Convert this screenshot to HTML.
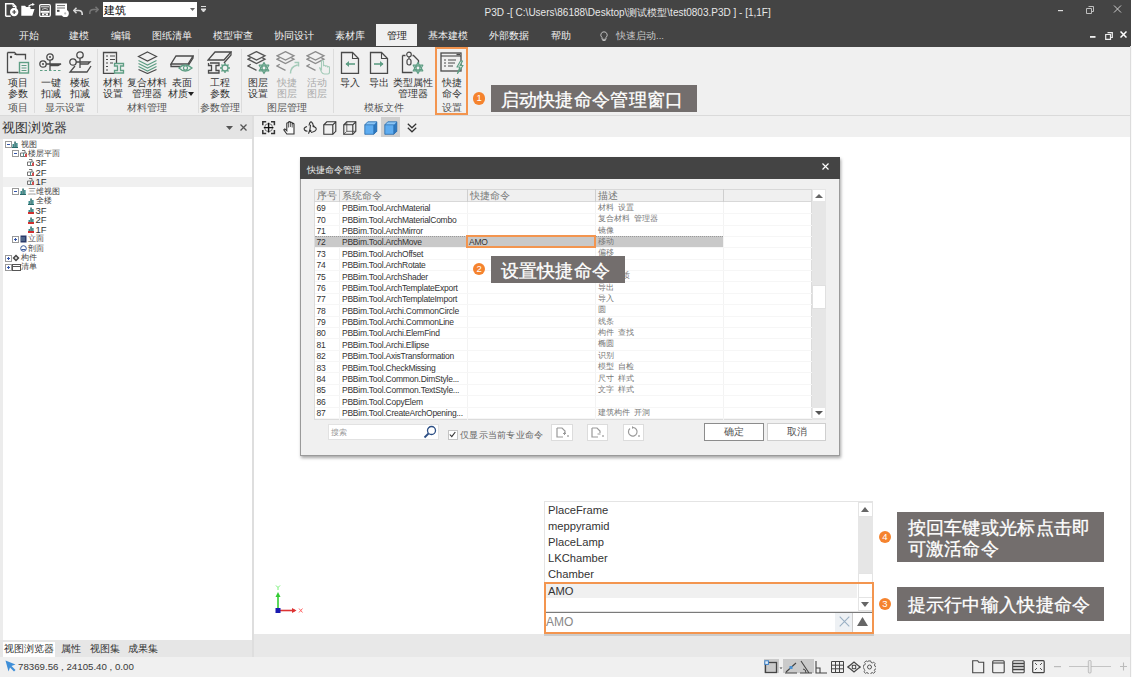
<!DOCTYPE html><html><head><meta charset="utf-8"><style>
html,body{margin:0;padding:0;}
body{width:1132px;height:677px;overflow:hidden;position:relative;background:#fff;font-family:"Liberation Sans",sans-serif;}
div,svg{position:absolute;box-sizing:border-box;}
.t{white-space:nowrap;}
</style></head><body>
<div style="left:0px;top:0px;width:1131px;height:46.7px;background:#444444"></div>
<svg style="position:absolute;left:4px;top:2px" width="16" height="16" viewBox="0 0 16 16"><path d="M1.7 14.2V1.7h7.3l2.8 2.8v2.8" fill="none" stroke="#ffffff" stroke-width="1.5"/><path d="M1.7 14.2h5" stroke="#ffffff" stroke-width="1.5"/><path d="M9 1.7v2.8h2.8" fill="none" stroke="#ffffff" stroke-width="1"/><circle cx="10.2" cy="10" r="4.2" fill="#ffffff"/><path d="M10.2 8v4M8.2 10h4" stroke="#444444" stroke-width="1.2"/></svg>
<svg style="position:absolute;left:21px;top:3px" width="14" height="13" viewBox="0 0 14 13"><path d="M0.3 2.8h3.7l1.2 1.3h4.3v2H13.5l-2.2 6.7H0.3z" fill="#ffffff"/><path d="M7.5 3.5q1.5-2 4.5-2.2" fill="none" stroke="#ffffff" stroke-width="1.3"/><path d="M11 0l2.8 1.2-2.2 1.8z" fill="#ffffff"/></svg>
<svg style="position:absolute;left:38.5px;top:3.5px" width="12" height="13" viewBox="0 0 12 13"><rect x="0.7" y="0.7" width="10.6" height="11.6" rx="1.2" fill="none" stroke="#ffffff" stroke-width="1.3"/><path d="M2 2.8h8" stroke="#ffffff" stroke-width="0.9"/><path d="M3 5.3q3-1.6 6 0" fill="none" stroke="#cfcfcf" stroke-width="1"/><rect x="1.5" y="6.8" width="9" height="2" fill="#ffffff"/><rect x="3" y="9.3" width="6" height="2.2" fill="#ffffff"/><path d="M5 10.4h2" stroke="#444444" stroke-width="0.9"/></svg>
<svg style="position:absolute;left:54.5px;top:3px" width="14" height="14" viewBox="0 0 14 14"><rect x="0.5" y="0.5" width="11.5" height="12" fill="#ffffff"/><path d="M2 2.6h8M2 5h8" stroke="#444444" stroke-width="0.8"/><rect x="2" y="6.8" width="2.5" height="2" fill="#444444"/><circle cx="10.2" cy="10.4" r="3.6" fill="#ffffff"/><circle cx="10.2" cy="10.4" r="1.1" fill="#bbb"/></svg>
<svg style="position:absolute;left:72.5px;top:6.5px" width="10" height="8" viewBox="0 0 10 8"><path d="M3.5 0.8L0.8 3.5l2.7 2.7" fill="none" stroke="#d8d8d8" stroke-width="1.6"/><path d="M1 3.5h4.5q3.7 0 3.7 3.5v1" fill="none" stroke="#d8d8d8" stroke-width="1.6"/></svg>
<svg style="position:absolute;left:88.5px;top:5.5px" width="10" height="8" viewBox="0 0 10 8"><path d="M6.5 0.8l2.7 2.7-2.7 2.7" fill="none" stroke="#777" stroke-width="1.5"/><path d="M9 3.5H4.5Q0.8 3.5 0.8 7v1" fill="none" stroke="#777" stroke-width="1.5"/></svg>
<div style="left:103px;top:2px;width:94px;height:15px;background:#fff"></div>
<div class="t" style="left:104px;top:-0.5px;height:20px;line-height:20px;font-size:10.5px;color:#000">建筑</div>
<svg style="position:absolute;left:190px;top:8px" width="5" height="3" viewBox="0 0 5 3"><path d="M0 0h5L2.5 3z" fill="#666"/></svg>
<svg style="position:absolute;left:201px;top:6px" width="5" height="8" viewBox="0 0 5 8"><path d="M0 0.5h5M0 3h5L2.5 6z" stroke="#ddd" fill="#ddd" stroke-width="1"/></svg>
<div class="t" style="left:484.5px;top:3px;height:20px;line-height:20px;font-size:10px;color:#e8e8e8">P3D -[ C:\Users\86188\Desktop\测试模型\test0803.P3D ] - [1,1F]</div>
<svg style="position:absolute;left:1057.5px;top:9px" width="6" height="3" viewBox="0 0 6 3"><rect x="0" y="1" width="5" height="1.2" fill="#ddd"/></svg>
<svg style="position:absolute;left:1085.5px;top:5.5px" width="8" height="8" viewBox="0 0 8 8"><path d="M2.5 0.5h5v5h-1.5M0.5 2.5h5v5h-5z" fill="none" stroke="#ccc" stroke-width="0.9"/></svg>
<svg style="position:absolute;left:1112.5px;top:5px" width="9" height="8" viewBox="0 0 9 8"><path d="M1 0.5l7 7M8 0.5l-7 7" stroke="#ccc" stroke-width="1"/></svg>
<svg style="position:absolute;left:1090px;top:36px" width="6" height="3" viewBox="0 0 6 3"><rect x="0" y="0" width="5.5" height="1.8" fill="#eee"/></svg>
<svg style="position:absolute;left:1105px;top:31.5px" width="8" height="8" viewBox="0 0 8 8"><path d="M2.5 0.7h4.8v4.8h-1.3M0.7 2.5h4.8v4.8h-4.8z" fill="none" stroke="#eee" stroke-width="1.2"/></svg>
<svg style="position:absolute;left:1120px;top:31px" width="7" height="7" viewBox="0 0 7 7"><path d="M0.5 0.5l6 6M6.5 0.5l-6 6" stroke="#fff" stroke-width="1.5"/></svg>
<div style="left:376px;top:24px;width:41px;height:22px;background:#f0f0f0"></div>
<div class="t" style="left:-71.5px;top:26px;width:200px;height:20px;line-height:20px;text-align:center;font-size:9.5px;color:#f0f0f0">开始</div>
<div class="t" style="left:-21.5px;top:26px;width:200px;height:20px;line-height:20px;text-align:center;font-size:9.5px;color:#f0f0f0">建模</div>
<div class="t" style="left:20.5px;top:26px;width:200px;height:20px;line-height:20px;text-align:center;font-size:9.5px;color:#f0f0f0">编辑</div>
<div class="t" style="left:72px;top:26px;width:200px;height:20px;line-height:20px;text-align:center;font-size:9.5px;color:#f0f0f0">图纸清单</div>
<div class="t" style="left:133px;top:26px;width:200px;height:20px;line-height:20px;text-align:center;font-size:9.5px;color:#f0f0f0">模型审查</div>
<div class="t" style="left:194px;top:26px;width:200px;height:20px;line-height:20px;text-align:center;font-size:9.5px;color:#f0f0f0">协同设计</div>
<div class="t" style="left:250px;top:26px;width:200px;height:20px;line-height:20px;text-align:center;font-size:9.5px;color:#f0f0f0">素材库</div>
<div class="t" style="left:296.5px;top:26px;width:200px;height:20px;line-height:20px;text-align:center;font-size:9.5px;color:#222">管理</div>
<div class="t" style="left:347.7px;top:26px;width:200px;height:20px;line-height:20px;text-align:center;font-size:9.5px;color:#f0f0f0">基本建模</div>
<div class="t" style="left:409px;top:26px;width:200px;height:20px;line-height:20px;text-align:center;font-size:9.5px;color:#f0f0f0">外部数据</div>
<div class="t" style="left:460.5px;top:26px;width:200px;height:20px;line-height:20px;text-align:center;font-size:9.5px;color:#f0f0f0">帮助</div>
<svg style="position:absolute;left:599.5px;top:30.5px" width="8" height="11" viewBox="0 0 8 11"><path d="M4 0.8a3.2 3.2 0 0 1 2 5.7v1.8h-4v-1.8a3.2 3.2 0 0 1 2-5.7z" fill="none" stroke="#ccc" stroke-width="0.9"/><path d="M2.5 9.5h3" stroke="#ccc" stroke-width="0.9"/></svg>
<div class="t" style="left:616px;top:26px;height:20px;line-height:20px;font-size:9.5px;color:#c8c8c8">快速启动...</div>
<div style="left:0px;top:46.5px;width:1132px;height:69.5px;background:#f0f0f0;border-bottom:1px solid #dadada"></div>
<div style="left:34px;top:49px;width:1px;height:64px;background:#dcdcdc"></div>
<div style="left:96.5px;top:49px;width:1px;height:64px;background:#dcdcdc"></div>
<div style="left:198px;top:49px;width:1px;height:64px;background:#dcdcdc"></div>
<div style="left:241px;top:49px;width:1px;height:64px;background:#dcdcdc"></div>
<div style="left:332.8px;top:49px;width:1px;height:64px;background:#dcdcdc"></div>
<div class="t" style="left:-82.3px;top:73px;width:200px;height:20px;line-height:20px;text-align:center;font-size:9.5px;color:#333">项目</div>
<div class="t" style="left:-82.3px;top:83.5px;width:200px;height:20px;line-height:20px;text-align:center;font-size:9.5px;color:#333">参数</div>
<div class="t" style="left:-82.3px;top:98px;width:200px;height:20px;line-height:20px;text-align:center;font-size:9.5px;color:#555">项目</div>
<div class="t" style="left:-49.2px;top:73px;width:200px;height:20px;line-height:20px;text-align:center;font-size:9.5px;color:#333">一键</div>
<div class="t" style="left:-49.2px;top:83.5px;width:200px;height:20px;line-height:20px;text-align:center;font-size:9.5px;color:#333">扣减</div>
<div class="t" style="left:-20px;top:73px;width:200px;height:20px;line-height:20px;text-align:center;font-size:9.5px;color:#333">楼板</div>
<div class="t" style="left:-20px;top:83.5px;width:200px;height:20px;line-height:20px;text-align:center;font-size:9.5px;color:#333">扣减</div>
<div class="t" style="left:-35px;top:98px;width:200px;height:20px;line-height:20px;text-align:center;font-size:9.5px;color:#555">显示设置</div>
<div class="t" style="left:13px;top:73px;width:200px;height:20px;line-height:20px;text-align:center;font-size:9.5px;color:#333">材料</div>
<div class="t" style="left:13px;top:83.5px;width:200px;height:20px;line-height:20px;text-align:center;font-size:9.5px;color:#333">设置</div>
<div class="t" style="left:47.400000000000006px;top:73px;width:200px;height:20px;line-height:20px;text-align:center;font-size:9.5px;color:#333">复合材料</div>
<div class="t" style="left:47.400000000000006px;top:83.5px;width:200px;height:20px;line-height:20px;text-align:center;font-size:9.5px;color:#333">管理器</div>
<div class="t" style="left:82px;top:73px;width:200px;height:20px;line-height:20px;text-align:center;font-size:9.5px;color:#333">表面</div>
<div class="t" style="left:78px;top:83.5px;width:200px;height:20px;line-height:20px;text-align:center;font-size:9.5px;color:#333">材质</div>
<svg style="position:absolute;left:188px;top:91.5px" width="6" height="4" viewBox="0 0 6 4"><path d="M0 0h6L3 4z" fill="#222"/></svg>
<div class="t" style="left:47.400000000000006px;top:98px;width:200px;height:20px;line-height:20px;text-align:center;font-size:9.5px;color:#555">材料管理</div>
<div class="t" style="left:119.69999999999999px;top:73px;width:200px;height:20px;line-height:20px;text-align:center;font-size:9.5px;color:#333">工程</div>
<div class="t" style="left:119.69999999999999px;top:83.5px;width:200px;height:20px;line-height:20px;text-align:center;font-size:9.5px;color:#333">参数</div>
<div class="t" style="left:119.69999999999999px;top:98px;width:200px;height:20px;line-height:20px;text-align:center;font-size:9.5px;color:#555">参数管理</div>
<div class="t" style="left:158.2px;top:73px;width:200px;height:20px;line-height:20px;text-align:center;font-size:9.5px;color:#333">图层</div>
<div class="t" style="left:158.2px;top:83.5px;width:200px;height:20px;line-height:20px;text-align:center;font-size:9.5px;color:#333">设置</div>
<div class="t" style="left:186.89999999999998px;top:73px;width:200px;height:20px;line-height:20px;text-align:center;font-size:9.5px;color:#aaa">快捷</div>
<div class="t" style="left:186.89999999999998px;top:83.5px;width:200px;height:20px;line-height:20px;text-align:center;font-size:9.5px;color:#aaa">图层</div>
<div class="t" style="left:216.7px;top:73px;width:200px;height:20px;line-height:20px;text-align:center;font-size:9.5px;color:#aaa">活动</div>
<div class="t" style="left:216.7px;top:83.5px;width:200px;height:20px;line-height:20px;text-align:center;font-size:9.5px;color:#aaa">图层</div>
<div class="t" style="left:187.3px;top:98px;width:200px;height:20px;line-height:20px;text-align:center;font-size:9.5px;color:#555">图层管理</div>
<div class="t" style="left:249.89999999999998px;top:73px;width:200px;height:20px;line-height:20px;text-align:center;font-size:9.5px;color:#333">导入</div>
<div class="t" style="left:278.6px;top:73px;width:200px;height:20px;line-height:20px;text-align:center;font-size:9.5px;color:#333">导出</div>
<div class="t" style="left:313.4px;top:73px;width:200px;height:20px;line-height:20px;text-align:center;font-size:9.5px;color:#333">类型属性</div>
<div class="t" style="left:313px;top:83.5px;width:200px;height:20px;line-height:20px;text-align:center;font-size:9.5px;color:#333">管理器</div>
<div class="t" style="left:284px;top:98px;width:200px;height:20px;line-height:20px;text-align:center;font-size:9.5px;color:#555">模板文件</div>
<div class="t" style="left:351.5px;top:73px;width:200px;height:20px;line-height:20px;text-align:center;font-size:9.5px;color:#333">快捷</div>
<div class="t" style="left:351.5px;top:83.5px;width:200px;height:20px;line-height:20px;text-align:center;font-size:9.5px;color:#333">命令</div>
<div class="t" style="left:351.5px;top:98px;width:200px;height:20px;line-height:20px;text-align:center;font-size:9.5px;color:#555">设置</div>
<div style="left:434.5px;top:46.5px;width:33px;height:68.5px;border:2px solid #f3954f"></div>
<svg style="position:absolute;left:6px;top:51px" width="24" height="23" viewBox="0 0 24 23"><path d="M1.5 1.5h7l2 2h9v5" fill="none" stroke="#4a4a4a" stroke-width="1.3"/><path d="M8.5 3.5h10" stroke="#4a4a4a" stroke-width="1"/><path d="M1.5 1.5v20h11" fill="none" stroke="#4a4a4a" stroke-width="1.3"/><circle cx="5" cy="6" r="1.2" fill="#4a4a4a"/><rect x="13.5" y="11.5" width="9" height="10.5" fill="none" stroke="#5e9e84" stroke-width="1.4"/><path d="M15.5 14.5h5M15.5 17h5M15.5 19.5h5" stroke="#5e9e84" stroke-width="1"/></svg>
<svg style="position:absolute;left:39px;top:53px" width="24" height="19" viewBox="0 0 24 19"><circle cx="11" cy="4" r="3.2" fill="none" stroke="#4a4a4a" stroke-width="1.3"/><circle cx="4" cy="11" r="3.2" fill="none" stroke="#4a4a4a" stroke-width="1.3"/><circle cx="11" cy="4" r="1" fill="#4a4a4a"/><circle cx="4" cy="11" r="1" fill="#4a4a4a"/><path d="M11 7v10M7 11h15l-3 1.5h-8" fill="none" stroke="#4a4a4a" stroke-width="1.3"/><path d="M1 17.5h22" stroke="#5e9e84" stroke-width="1.2" stroke-dasharray="2.5 2"/></svg>
<svg style="position:absolute;left:68px;top:51px" width="24" height="23" viewBox="0 0 24 23"><circle cx="12" cy="4" r="3.2" fill="none" stroke="#4a4a4a" stroke-width="1.3"/><circle cx="5" cy="11" r="3.2" fill="none" stroke="#4a4a4a" stroke-width="1.3"/><path d="M12 7v10M8 11h14l-2 2H12" fill="none" stroke="#4a4a4a" stroke-width="1.3"/><path d="M7 15l-5 6h17l4-6" fill="none" stroke="#4a4a4a" stroke-width="1.3"/></svg>
<svg style="position:absolute;left:102px;top:51px" width="23" height="23" viewBox="0 0 23 23"><path d="M14.5 13V1.5h-13v21h11" fill="none" stroke="#4a4a4a" stroke-width="1.3"/><path d="M4 5h2M8 5h5M4 8.5h2M8 8.5h5M4 12h2M8 12h3M4 15.5h2M4 19h2" stroke="#4a4a4a" stroke-width="1.1"/><path d="M12.5 12.5h9v2.5h-3v4.5h3V22h-9v-2.5h3V15h-3z" fill="none" stroke="#5e9e84" stroke-width="1.3"/></svg>
<svg style="position:absolute;left:137px;top:51px" width="21" height="23" viewBox="0 0 21 23"><path d="M10.5 1l9 4.5-9 4.5-9-4.5z" fill="none" stroke="#4a4a4a" stroke-width="1.2"/><path d="M1.5 9.5l9 4.5 9-4.5M1.5 12.5l9 4.5 9-4.5M1.5 15.5l9 4.5 9-4.5" fill="none" stroke="#5e9e84" stroke-width="1.2"/><path d="M1.5 18.5l9 4 9-4" fill="none" stroke="#4a4a4a" stroke-width="1.2"/></svg>
<svg style="position:absolute;left:170px;top:55px" width="24" height="18" viewBox="0 0 24 18"><path d="M6 1h17l-5 8H1z" fill="none" stroke="#4a4a4a" stroke-width="1.3"/><path d="M1 9v2.5h13M23 1v2l-5 8" fill="none" stroke="#4a4a4a" stroke-width="1.3"/><path d="M9 13q6-6 13 0q-7 6-13 0z" fill="#f0f0f0" stroke="#5e9e84" stroke-width="1.3"/><circle cx="15.5" cy="13" r="2" fill="none" stroke="#5e9e84" stroke-width="1.2"/></svg>
<svg style="position:absolute;left:207px;top:51px" width="25" height="23" viewBox="0 0 25 23"><path d="M8 1h16l-7 8H1z" fill="none" stroke="#4a4a4a" stroke-width="1.3"/><path d="M3 12h9v2.5H9v5h3V22H1.5v-2.5h3v-5h-3V12" fill="none" stroke="#4a4a4a" stroke-width="1.3"/><path d="M24 1v3l-7 8" fill="none" stroke="#4a4a4a" stroke-width="1.3"/><circle cx="18" cy="17" r="3" fill="none" stroke="#5e9e84" stroke-width="1.3"/><path d="M18 12v2M18 20v2M13 17h2M21 17h2M14.5 13.5l1.4 1.4M20.1 19.1l1.4 1.4M14.5 20.5l1.4-1.4M20.1 14.9l1.4-1.4" stroke="#5e9e84" stroke-width="1.4"/></svg>
<svg style="position:absolute;left:247px;top:51px" width="24" height="24" viewBox="0 0 24 24"><path d="M1 4.8L9.5 0.6L18 4.8L9.5 9z" fill="none" stroke="#555" stroke-width="1.3"/><path d="M3.8 6.6L1 8.2l8.5 4.3 8.5-4.3-2.8-1.6" fill="none" stroke="#555" stroke-width="1.3"/><path d="M3.8 13.3L1 15l8.5 4.3" fill="none" stroke="#555" stroke-width="1.3"/><path d="M17 11.5l4.8 8.3h-9.6zM17 22.5l-4.8-8.3h9.6z" fill="#f0f0f0" stroke="#5e9e84" stroke-width="1.2" stroke-linejoin="round"/><circle cx="17" cy="17" r="2" fill="none" stroke="#5e9e84" stroke-width="1.2"/></svg>
<svg style="position:absolute;left:276px;top:51px" width="24" height="24" viewBox="0 0 24 24"><path d="M1 4.8L9.5 0.6L18 4.8L9.5 9z" fill="none" stroke="#8c8c8c" stroke-width="1.3"/><path d="M3.8 6.6L1 8.2l8.5 4.3 8.5-4.3-2.8-1.6" fill="none" stroke="#8c8c8c" stroke-width="1.3"/><path d="M3.8 13.3L1 15l8.5 4.3" fill="none" stroke="#8c8c8c" stroke-width="1.3"/><path d="M14.5 22.5q0-7 7-8.5M18.5 11.5h4v4" fill="none" stroke="#a4cbb9" stroke-width="1.5"/></svg>
<svg style="position:absolute;left:306px;top:51px" width="24" height="24" viewBox="0 0 24 24"><path d="M1 4.8L9.5 0.6L18 4.8L9.5 9z" fill="none" stroke="#8c8c8c" stroke-width="1.3"/><path d="M3.8 6.6L1 8.2l8.5 4.3 8.5-4.3-2.8-1.6" fill="none" stroke="#8c8c8c" stroke-width="1.3"/><path d="M3.8 13.3L1 15l8.5 4.3" fill="none" stroke="#8c8c8c" stroke-width="1.3"/><path d="M13.5 16.5l2 4.5q1 2 3 2h3.5q1.5 0 1.5-2v-4.5q0-1-1-1t-1 1v-0.8q0-1-1-1t-1 1v-0.5q0-1-1-1t-1 1V10.5q0-1-1-1t-1 1v8z" fill="#f0f0f0" stroke="#a4cbb9" stroke-width="1.1"/></svg>
<svg style="position:absolute;left:340px;top:51px" width="20" height="23" viewBox="0 0 20 23"><path d="M1.5 1.5h11l6 6v15h-17z" fill="none" stroke="#4a4a4a" stroke-width="1.3"/><path d="M12.5 1.5v6h6" fill="none" stroke="#4a4a4a" stroke-width="1.1"/><path d="M6 13h9" stroke="#5e9e84" stroke-width="1.6"/><path d="M9 10l-3.5 3 3.5 3z" fill="#5e9e84"/></svg>
<svg style="position:absolute;left:369px;top:51px" width="20" height="23" viewBox="0 0 20 23"><path d="M1.5 1.5h11l6 6v15h-17z" fill="none" stroke="#4a4a4a" stroke-width="1.3"/><path d="M12.5 1.5v6h6" fill="none" stroke="#4a4a4a" stroke-width="1.1"/><path d="M5 13h9" stroke="#5e9e84" stroke-width="1.6"/><path d="M11 10l3.5 3-3.5 3z" fill="#5e9e84"/></svg>
<svg style="position:absolute;left:401px;top:51px" width="24" height="24" viewBox="0 0 24 24"><path d="M1.5 4.5h3M11.5 4.5h1l5 5V12M1.5 4.5v17h10" fill="none" stroke="#4a4a4a" stroke-width="1.3"/><circle cx="8" cy="3.5" r="2.3" fill="none" stroke="#4a4a4a" stroke-width="1.2"/><rect x="6" y="8" width="4" height="6" rx="2" fill="none" stroke="#4a4a4a" stroke-width="1.2"/><path d="M8 6v2" stroke="#4a4a4a" stroke-width="1.2"/><path d="M17 11.5l4.8 8.3h-9.6zM17 22.5l-4.8-8.3h9.6z" fill="#f0f0f0" stroke="#5e9e84" stroke-width="1.2" stroke-linejoin="round"/><circle cx="17" cy="17" r="2" fill="none" stroke="#5e9e84" stroke-width="1.2"/></svg>
<svg style="position:absolute;left:439.5px;top:51.5px" width="25" height="23" viewBox="0 0 25 23"><rect x="1" y="1" width="20" height="18" fill="none" stroke="#4a4a4a" stroke-width="1.3"/><path d="M1 4h20" stroke="#4a4a4a" stroke-width="1.1"/><path d="M16.5 2.5h3.5" stroke="#4a4a4a" stroke-width="1.5"/><path d="M4 8h2M8 8h8M4 11h2M8 11h7M4 14h2M8 14h5" stroke="#4a4a4a" stroke-width="1.1"/><path d="M20.5 9l-3.5 6h3l-2.5 6.5 5.5-8h-3l2.5-4.5z" fill="#f0f0f0" stroke="#5e9e84" stroke-width="1.2" stroke-linejoin="round"/></svg>
<div style="left:0px;top:115.5px;width:251.5px;height:23.2px;background:#e4e4e4"></div>
<div class="t" style="left:2px;top:118px;height:20px;line-height:20px;font-size:13px;color:#333">视图浏览器</div>
<svg style="position:absolute;left:226px;top:126px" width="7" height="4" viewBox="0 0 7 4"><path d="M0 0h7L3.5 4z" fill="#555"/></svg>
<svg style="position:absolute;left:240.3px;top:124.3px" width="7" height="7" viewBox="0 0 7 7"><path d="M0.5 0.5l6 6M6.5 0.5l-6 6" stroke="#555" stroke-width="1.3"/></svg>
<div style="left:0px;top:138.7px;width:3px;height:501.3px;background:#ececec"></div>
<div style="left:3px;top:138.7px;width:248.5px;height:501.3px;background:#fff"></div>
<div style="left:3px;top:177px;width:249px;height:10px;background:#f0f0f0"></div>
<svg style="position:absolute;left:4.5px;top:141.0px" width="7" height="7" viewBox="0 0 7 7"><rect x="0.5" y="0.5" width="6" height="6" fill="#fff" stroke="#999" stroke-width="1"/><path d="M2 3.5h3" stroke="#3355aa" stroke-width="1"/></svg>
<svg style="position:absolute;left:12px;top:141.0px" width="6" height="7" viewBox="0 0 6 7"><rect x="0" y="6" width="6" height="1" fill="#2a6a6a"/><rect x="0.5" y="3" width="1.5" height="3" fill="#3a8a8a"/><rect x="2.3" y="0.5" width="1.5" height="5.5" fill="#2a6a6a"/><rect x="4.1" y="2" width="1.5" height="4" fill="#3a8a8a"/></svg>
<div class="t" style="left:21px;top:134.5px;height:20px;line-height:20px;font-size:8px;color:#444;font-family:&quot;Liberation Serif&quot;,serif">视图</div>
<svg style="position:absolute;left:12px;top:150.46px" width="7" height="7" viewBox="0 0 7 7"><rect x="0.5" y="0.5" width="6" height="6" fill="#fff" stroke="#999" stroke-width="1"/><path d="M2 3.5h3" stroke="#3355aa" stroke-width="1"/></svg>
<svg style="position:absolute;left:19.5px;top:149.96px" width="7" height="7" viewBox="0 0 7 7"><path d="M2 0.5h3v2.5M0.5 3h6v3.5h-6z" fill="none" stroke="#666" stroke-width="0.9"/><path d="M3.5 3v3.5" stroke="#3a8a8a" stroke-width="0.9"/><rect x="5" y="4" width="2" height="3" fill="#d05050"/></svg>
<div class="t" style="left:28.4px;top:143.96px;height:20px;line-height:20px;font-size:8px;color:#444;font-family:&quot;Liberation Serif&quot;,serif">楼层平面</div>
<svg style="position:absolute;left:27px;top:159.42000000000002px" width="7" height="7" viewBox="0 0 7 7"><path d="M2 0.5h3v2.5M0.5 3h6v3.5h-6z" fill="none" stroke="#666" stroke-width="0.9"/><path d="M3.5 3v3.5" stroke="#3a8a8a" stroke-width="0.9"/><rect x="5" y="4" width="2" height="3" fill="#d05050"/></svg>
<div class="t" style="left:35.5px;top:153.42000000000002px;height:20px;line-height:20px;font-size:9.5px;color:#333">3F</div>
<svg style="position:absolute;left:27px;top:168.88px" width="7" height="7" viewBox="0 0 7 7"><path d="M2 0.5h3v2.5M0.5 3h6v3.5h-6z" fill="none" stroke="#666" stroke-width="0.9"/><path d="M3.5 3v3.5" stroke="#3a8a8a" stroke-width="0.9"/><rect x="5" y="4" width="2" height="3" fill="#d05050"/></svg>
<div class="t" style="left:35.5px;top:162.88px;height:20px;line-height:20px;font-size:9.5px;color:#333">2F</div>
<svg style="position:absolute;left:27px;top:178.34px" width="7" height="7" viewBox="0 0 7 7"><path d="M2 0.5h3v2.5M0.5 3h6v3.5h-6z" fill="none" stroke="#666" stroke-width="0.9"/><path d="M3.5 3v3.5" stroke="#3a8a8a" stroke-width="0.9"/><rect x="5" y="4" width="2" height="3" fill="#d05050"/></svg>
<div class="t" style="left:35.5px;top:172.34px;height:20px;line-height:20px;font-size:9.5px;color:#333">1F</div>
<svg style="position:absolute;left:12px;top:188.3px" width="7" height="7" viewBox="0 0 7 7"><rect x="0.5" y="0.5" width="6" height="6" fill="#fff" stroke="#999" stroke-width="1"/><path d="M2 3.5h3" stroke="#3355aa" stroke-width="1"/></svg>
<svg style="position:absolute;left:19.5px;top:188.3px" width="6" height="7" viewBox="0 0 6 7"><rect x="0" y="6" width="6" height="1" fill="#2a6a6a"/><rect x="0.5" y="3" width="1.5" height="3" fill="#3a8a8a"/><rect x="2.3" y="0.5" width="1.5" height="5.5" fill="#2a6a6a"/><rect x="4.1" y="2" width="1.5" height="4" fill="#3a8a8a"/></svg>
<div class="t" style="left:28.4px;top:181.8px;height:20px;line-height:20px;font-size:8px;color:#444;font-family:&quot;Liberation Serif&quot;,serif">三维视图</div>
<svg style="position:absolute;left:27.5px;top:197.76px" width="6" height="7" viewBox="0 0 6 7"><rect x="0" y="6" width="6" height="1" fill="#2a6a6a"/><rect x="0.5" y="3" width="1.5" height="3" fill="#3a8a8a"/><rect x="2.3" y="0.5" width="1.5" height="5.5" fill="#2a6a6a"/><rect x="4.1" y="2" width="1.5" height="4" fill="#3a8a8a"/></svg>
<div class="t" style="left:35.5px;top:191.26px;height:20px;line-height:20px;font-size:8px;color:#444;font-family:&quot;Liberation Serif&quot;,serif">全楼</div>
<svg style="position:absolute;left:27.5px;top:207.22px" width="6" height="7" viewBox="0 0 6 7"><rect x="0" y="5" width="6" height="2" fill="#d03030"/><rect x="0.5" y="3" width="1.5" height="2" fill="#3a8a8a"/><rect x="2.3" y="0.5" width="1.5" height="4.5" fill="#2a6a6a"/><rect x="4.1" y="2" width="1.5" height="3" fill="#3a8a8a"/></svg>
<div class="t" style="left:35.5px;top:200.72px;height:20px;line-height:20px;font-size:9.5px;color:#333">3F</div>
<svg style="position:absolute;left:27.5px;top:216.68px" width="6" height="7" viewBox="0 0 6 7"><rect x="0" y="5" width="6" height="2" fill="#d03030"/><rect x="0.5" y="3" width="1.5" height="2" fill="#3a8a8a"/><rect x="2.3" y="0.5" width="1.5" height="4.5" fill="#2a6a6a"/><rect x="4.1" y="2" width="1.5" height="3" fill="#3a8a8a"/></svg>
<div class="t" style="left:35.5px;top:210.18px;height:20px;line-height:20px;font-size:9.5px;color:#333">2F</div>
<svg style="position:absolute;left:27.5px;top:226.14000000000001px" width="6" height="7" viewBox="0 0 6 7"><rect x="0" y="5" width="6" height="2" fill="#d03030"/><rect x="0.5" y="3" width="1.5" height="2" fill="#3a8a8a"/><rect x="2.3" y="0.5" width="1.5" height="4.5" fill="#2a6a6a"/><rect x="4.1" y="2" width="1.5" height="3" fill="#3a8a8a"/></svg>
<div class="t" style="left:35.5px;top:219.64000000000001px;height:20px;line-height:20px;font-size:9.5px;color:#333">1F</div>
<svg style="position:absolute;left:12px;top:235.60000000000002px" width="7" height="7" viewBox="0 0 7 7"><rect x="0.5" y="0.5" width="6" height="6" fill="#fff" stroke="#999" stroke-width="1"/><path d="M2 3.5h3 M3.5 2v3" stroke="#3355aa" stroke-width="1"/></svg>
<svg style="position:absolute;left:19.5px;top:235.10000000000002px" width="7" height="8" viewBox="0 0 7 8"><rect x="0.5" y="0.5" width="6" height="7" fill="#2a3a6a" /><path d="M2 2v4M4 2v4" stroke="#8ab" stroke-width="0.8"/></svg>
<div class="t" style="left:28.4px;top:229.10000000000002px;height:20px;line-height:20px;font-size:8px;color:#444;font-family:&quot;Liberation Serif&quot;,serif">立面</div>
<svg style="position:absolute;left:19.5px;top:245.06px" width="7" height="7" viewBox="0 0 7 7"><circle cx="3.5" cy="3.5" r="2.8" fill="none" stroke="#3a5a9a" stroke-width="1"/><path d="M1.5 4.5h4" stroke="#3a5a9a"/></svg>
<div class="t" style="left:28.4px;top:238.56px;height:20px;line-height:20px;font-size:8px;color:#444;font-family:&quot;Liberation Serif&quot;,serif">剖面</div>
<svg style="position:absolute;left:4.5px;top:254.51999999999998px" width="7" height="7" viewBox="0 0 7 7"><rect x="0.5" y="0.5" width="6" height="6" fill="#fff" stroke="#999" stroke-width="1"/><path d="M2 3.5h3 M3.5 2v3" stroke="#3355aa" stroke-width="1"/></svg>
<svg style="position:absolute;left:11.5px;top:254.01999999999998px" width="8" height="8" viewBox="0 0 8 8"><path d="M4 0.5l3.5 3.5-3.5 3.5-3.5-3.5z" fill="#444"/><path d="M4 2.5l1.5 1.5-1.5 1.5-1.5-1.5z" fill="#ddd"/></svg>
<div class="t" style="left:21px;top:248.01999999999998px;height:20px;line-height:20px;font-size:8px;color:#444;font-family:&quot;Liberation Serif&quot;,serif">构件</div>
<svg style="position:absolute;left:4.5px;top:263.98px" width="7" height="7" viewBox="0 0 7 7"><rect x="0.5" y="0.5" width="6" height="6" fill="#fff" stroke="#999" stroke-width="1"/><path d="M2 3.5h3 M3.5 2v3" stroke="#3355aa" stroke-width="1"/></svg>
<svg style="position:absolute;left:11.5px;top:263.98px" width="9" height="7" viewBox="0 0 9 7"><rect x="0.5" y="0.5" width="8" height="6" fill="none" stroke="#555" stroke-width="1"/><path d="M1 2.5h7" stroke="#555" stroke-width="1"/></svg>
<div class="t" style="left:21px;top:257.48px;height:20px;line-height:20px;font-size:8px;color:#444;font-family:&quot;Liberation Serif&quot;,serif">清单</div>
<div style="left:0px;top:640px;width:252px;height:17px;background:#e6e6e6"></div>
<div style="left:3px;top:641.8px;width:52px;height:15.5px;background:#fff"></div>
<div class="t" style="left:-71.5px;top:639px;width:200px;height:20px;line-height:20px;text-align:center;font-size:9.5px;color:#333">视图浏览器</div>
<div class="t" style="left:-29px;top:639px;width:200px;height:20px;line-height:20px;text-align:center;font-size:9.5px;color:#333">属性</div>
<div class="t" style="left:4.5px;top:639px;width:200px;height:20px;line-height:20px;text-align:center;font-size:9.5px;color:#333">视图集</div>
<div class="t" style="left:42.5px;top:639px;width:200px;height:20px;line-height:20px;text-align:center;font-size:9.5px;color:#333">成果集</div>
<div style="left:251.5px;top:115.5px;width:2.5px;height:542px;background:#dedede"></div>
<div style="left:254px;top:115.5px;width:876px;height:21.8px;background:#f0f0f0"></div>
<svg style="position:absolute;left:261.5px;top:120.5px" width="14" height="14" viewBox="0 0 14 14"><path d="M0.8 4.2V0.8h3.4M9 0.8h3.4v3.4M12.4 9v3.4H9M4.2 12.4H0.8V9" fill="none" stroke="#333" stroke-width="1.5"/><circle cx="6.6" cy="6.6" r="4" fill="none" stroke="#666" stroke-width="0.9"/><path d="M6.6 1.8v9.6M1.8 6.6h9.6" stroke="#111" stroke-width="1.4"/></svg>
<svg style="position:absolute;left:282.5px;top:120.5px" width="13" height="14" viewBox="0 0 13 14"><path d="M3.8 13L0.8 8.8l1-0.9 2 1.8V2.6a0.9 0.9 0 0 1 1.8 0V1.5a0.9 0.9 0 0 1 1.8 0v0.6a0.9 0.9 0 0 1 1.8 0v1.2a0.9 0.9 0 0 1 1.8 0V13z" fill="#fafafa" stroke="#333" stroke-width="1.1"/><path d="M5.6 2.5v4M7.4 2v4M9.2 3v3.5" stroke="#333" stroke-width="0.8"/></svg>
<svg style="position:absolute;left:302.5px;top:120.5px" width="14" height="14" viewBox="0 0 14 14"><path d="M4 5.5Q0 7 1.5 9q1 1 3 1.3M8 11.5q5-1 5.3-3.5q0-1.5-2.5-2.5" fill="none" stroke="#333" stroke-width="1.1"/><path d="M6 4.5Q7 0 8.5 1q1.5 1 2 4.5M5.5 12.8q2-4 2-9" fill="none" stroke="#333" stroke-width="1.1"/><circle cx="10.5" cy="5.2" r="1" fill="#333"/><circle cx="7.5" cy="10" r="1" fill="#333"/></svg>
<svg style="position:absolute;left:322.5px;top:120.5px" width="14" height="14" viewBox="0 0 14 14"><path d="M0.8 3.8L3.8 0.8h9v9.5l-3 3H0.8z" fill="none" stroke="#333" stroke-width="1.1"/><path d="M0.8 3.8h9v9.5M9.8 3.8l3-3" fill="none" stroke="#333" stroke-width="1.1"/></svg>
<svg style="position:absolute;left:342.5px;top:120.5px" width="14" height="14" viewBox="0 0 14 14"><path d="M0.8 3.8L3.8 0.8h9v9.5l-3 3H0.8z" fill="none" stroke="#333" stroke-width="1.1"/><path d="M0.8 3.8h9v9.5M9.8 3.8l3-3" fill="none" stroke="#333" stroke-width="1.1"/><path d="M3.8 0.8v9.5h9M3.8 10.3l-3 3" fill="none" stroke="#444" stroke-width="0.8"/></svg>
<svg style="position:absolute;left:363.5px;top:120.5px" width="14" height="14" viewBox="0 0 14 14"><path d="M0.8 3.8L3.8 0.8h9v9.5l-3 3H0.8z" fill="#5eacf0"/><path d="M9.8 3.8l3-3v9.5l-3 3z" fill="#2d78c0"/><path d="M0.8 3.8L3.8 0.8h9l-3 3z" fill="#8cc6f5"/><path d="M0.8 3.8h9v9.5" fill="none" stroke="#2a6aaa" stroke-width="0.7"/><path d="M0.8 3.8L3.8 0.8h9v9.5l-3 3H0.8z" fill="none" stroke="#2a6aaa" stroke-width="0.8"/></svg>
<div style="left:380.8px;top:117.3px;width:19.5px;height:19.5px;background:#cfcfcf"></div>
<svg style="position:absolute;left:383.8px;top:120.5px" width="14" height="14" viewBox="0 0 14 14"><path d="M0.8 3.8L3.8 0.8h9v9.5l-3 3H0.8z" fill="#5eacf0"/><path d="M9.8 3.8l3-3v9.5l-3 3z" fill="#2d78c0"/><path d="M0.8 3.8L3.8 0.8h9l-3 3z" fill="#8cc6f5"/><path d="M0.8 3.8h9v9.5" fill="none" stroke="#2a6aaa" stroke-width="0.7"/><path d="M0.8 3.8L3.8 0.8h9v9.5l-3 3H0.8z" fill="none" stroke="#2a6aaa" stroke-width="0.8"/></svg>
<svg style="position:absolute;left:406.5px;top:122.5px" width="10" height="10" viewBox="0 0 10 10"><path d="M0.8 0.8l4.2 4 4.2-4M0.8 4.8l4.2 4 4.2-4" fill="none" stroke="#333" stroke-width="1.2"/></svg>
<div style="left:1130px;top:46px;width:2px;height:631px;background:#fafafa"></div>
<div style="left:1130px;top:46px;width:1px;height:631px;background:#dcdcdc"></div>
<div style="left:254px;top:634px;width:876px;height:23px;background:#e8e8e8"></div>
<div style="left:0px;top:657px;width:1130px;height:20px;background:#f0f0f0"></div>
<svg style="position:absolute;left:5px;top:660px" width="11" height="12" viewBox="0 0 11 12"><path d="M0.5 0.5l10 4-4 1.5 4 4-1.5 1.5-4-4-1.5 4z" fill="#3f8fd8"/></svg>
<div class="t" style="left:18px;top:657px;height:20px;line-height:20px;font-size:9.7px;color:#3a3a3a">78369.56 , 24105.40 , 0.00</div>
<div style="left:763.5px;top:659.3px;width:15.3px;height:14.2px;background:#cacaca"></div>
<div style="left:783px;top:659.3px;width:30.7px;height:14.2px;background:#cacaca"></div>
<svg style="position:absolute;left:764px;top:660px" width="19" height="14" viewBox="0 0 19 14"><rect x="1.5" y="2.5" width="11" height="10" fill="none" stroke="#444" stroke-width="1.3"/><rect x="0.8" y="0.8" width="3.6" height="3.6" fill="#e8f0f8" stroke="#3a80c8" stroke-width="1"/><path d="M15.5 7.5h3l-1.5 1.5z" fill="#444"/></svg>
<svg style="position:absolute;left:784px;top:660px" width="14" height="14" viewBox="0 0 14 14"><path d="M1 13h12M2 12l10-9" stroke="#444" stroke-width="1.1"/><rect x="5.5" y="6" width="3" height="3" fill="#4a90d0"/></svg>
<svg style="position:absolute;left:799px;top:660px" width="14" height="14" viewBox="0 0 14 14"><path d="M1 13h12M2 1l8 12" stroke="#444" stroke-width="1.1"/><path d="M4 9q3 0 3 4" fill="none" stroke="#444"/></svg>
<svg style="position:absolute;left:815px;top:660px" width="13" height="14" viewBox="0 0 13 14"><path d="M1 1v12h11M1 8h4v5" fill="none" stroke="#444" stroke-width="1.1"/></svg>
<svg style="position:absolute;left:831px;top:661px" width="13" height="12" viewBox="0 0 13 12"><path d="M0.5 0.5h12v11h-12zM4.5 0.5v11M8.5 0.5v11M0.5 4.2h12M0.5 7.8h12" fill="none" stroke="#444" stroke-width="1"/></svg>
<svg style="position:absolute;left:846.5px;top:660px" width="14" height="14" viewBox="0 0 14 14"><path d="M1 7l6-5 6 5-6 5z" fill="none" stroke="#444" stroke-width="1.1"/><rect x="5.3" y="5.3" width="3.4" height="3.4" fill="none" stroke="#444" stroke-width="1"/><path d="M0 7l2-1.5v3zM14 7l-2-1.5v3z" fill="#444"/></svg>
<svg style="position:absolute;left:862.5px;top:660px" width="13" height="14" viewBox="0 0 13 14"><circle cx="6.5" cy="7" r="2" fill="none" stroke="#555" stroke-width="1"/><path d="M5.3 1h2.4l0.4 1.6 1.4 0.6 1.4-0.9 1.7 1.7-0.9 1.4 0.6 1.4 1.6 0.4v2.4l-1.6 0.4-0.6 1.4 0.9 1.4-1.7 1.7-1.4-0.9-1.4 0.6-0.4 1.6H5.3l-0.4-1.6-1.4-0.6-1.4 0.9-1.7-1.7 0.9-1.4-0.6-1.4L-0.3 8.2V5.8l1.6-0.4 0.6-1.4-0.9-1.4 1.7-1.7 1.4 0.9 1.4-0.6z" transform="translate(0.6 0) scale(0.92)" fill="none" stroke="#555" stroke-width="1"/></svg>
<svg style="position:absolute;left:972px;top:660px" width="14" height="14" viewBox="0 0 14 14"><path d="M0.7 0.7h5l1 1.5h5v10.5h-11z" fill="none" stroke="#444" stroke-width="1.1"/></svg>
<svg style="position:absolute;left:992px;top:660px" width="13" height="14" viewBox="0 0 13 14"><rect x="0.7" y="0.7" width="11.5" height="12" rx="1" fill="none" stroke="#444" stroke-width="1.1"/><path d="M1 3h11" stroke="#444" stroke-width="1.1"/></svg>
<svg style="position:absolute;left:1012px;top:660px" width="13" height="14" viewBox="0 0 13 14"><rect x="0.7" y="0.7" width="11.5" height="12" rx="1" fill="none" stroke="#444" stroke-width="1.1"/><path d="M1 3.5h11M1 6.5h11M1 9.5h11" stroke="#444" stroke-width="1.3"/></svg>
<svg style="position:absolute;left:1032px;top:660px" width="13" height="14" viewBox="0 0 13 14"><rect x="0.7" y="0.7" width="11.5" height="12" rx="1" fill="none" stroke="#444" stroke-width="1.2"/><path d="M3 3l2 2M10 3l-2 2M3 10l2-2M10 10l-2-2" fill="none" stroke="#444" stroke-width="0.9"/></svg>
<svg style="position:absolute;left:1053.5px;top:666px" width="7" height="2" viewBox="0 0 7 2"><rect width="7" height="1.2" fill="#bbb"/></svg>
<svg style="position:absolute;left:1069px;top:660px" width="42" height="14" viewBox="0 0 42 14"><path d="M0 6.5h42" stroke="#c4c4c4"/><rect x="19.3" y="0.5" width="2.8" height="12.5" rx="1" fill="#e8e8e8" stroke="#aaa" stroke-width="0.7"/></svg>
<svg style="position:absolute;left:1119.5px;top:662px" width="8" height="9" viewBox="0 0 8 9"><path d="M3.5 0.5v8M0 4.5h7" stroke="#bbb" stroke-width="1.1"/></svg>
<svg style="position:absolute;left:270px;top:582px" width="40" height="36" viewBox="0 0 40 36"><path d="M8 28.5V12" stroke="#3c3" stroke-width="1.6"/><path d="M5.5 15L8 10l2.5 5z" fill="#3c3"/><path d="M8 28.5h17" stroke="#d33" stroke-width="1.6"/><path d="M22 26l4.5 2.5L22 31z" fill="#d33"/><rect x="5.5" y="26" width="5" height="5" fill="#1a1ab0"/><path d="M6 3.5l2 2 2-2M8 5.5v2.5" fill="none" stroke="#6e6" stroke-width="0.9"/><path d="M29 26.5l3.5 4M32.5 26.5l-3.5 4" stroke="#f66" stroke-width="1"/></svg>
<div style="left:300px;top:157px;width:540px;height:298.8px;background:#f0f0f0;border:1px solid #9a9a9a;box-shadow:1px 2px 3px rgba(0,0,0,0.35)"></div>
<div style="left:300px;top:157px;width:540px;height:22px;background:#444444"></div>
<div class="t" style="left:307px;top:160px;height:20px;line-height:20px;font-size:9.4px;color:#eeeeee">快捷命令管理</div>
<svg style="position:absolute;left:821.5px;top:162.5px" width="7" height="7" viewBox="0 0 7 7"><path d="M0.5 0.5l6 6M6.5 0.5l-6 6" stroke="#fff" stroke-width="1.2"/></svg>
<div style="left:314px;top:189px;width:498px;height:230.5px;background:#fff;border:1px solid #dcdcdc"></div>
<div style="left:314px;top:189px;width:498px;height:12.5px;background:#f0f0f0;border:1px solid #d8d8d8"></div>
<div style="left:339.4px;top:189px;width:1px;height:230.5px;background:#f3f3f3"></div>
<div style="left:339.4px;top:189px;width:1px;height:12.5px;background:#cfcfcf"></div>
<div style="left:467px;top:189px;width:1px;height:230.5px;background:#f3f3f3"></div>
<div style="left:467px;top:189px;width:1px;height:12.5px;background:#cfcfcf"></div>
<div style="left:595px;top:189px;width:1px;height:230.5px;background:#f3f3f3"></div>
<div style="left:595px;top:189px;width:1px;height:12.5px;background:#cfcfcf"></div>
<div style="left:723px;top:189px;width:1px;height:230.5px;background:#f3f3f3"></div>
<div style="left:723px;top:189px;width:1px;height:12.5px;background:#cfcfcf"></div>
<div class="t" style="left:317px;top:185.5px;height:20px;line-height:20px;font-size:9.5px;color:#777;font-family:&quot;Liberation Serif&quot;,serif">序号</div>
<div class="t" style="left:342px;top:185.5px;height:20px;line-height:20px;font-size:9.5px;color:#777;font-family:&quot;Liberation Serif&quot;,serif">系统命令</div>
<div class="t" style="left:470px;top:185.5px;height:20px;line-height:20px;font-size:9.5px;color:#777;font-family:&quot;Liberation Serif&quot;,serif">快捷命令</div>
<div class="t" style="left:598px;top:185.5px;height:20px;line-height:20px;font-size:9.5px;color:#777;font-family:&quot;Liberation Serif&quot;,serif">描述</div>
<div style="left:315px;top:213.18611111111113px;width:497px;height:1px;background:#f6f6f6"></div>
<div class="t" style="left:316.5px;top:198.3px;height:20px;line-height:20px;font-size:8.5px;letter-spacing:-0.2px;color:#333">69</div>
<div class="t" style="left:342px;top:198.3px;height:20px;line-height:20px;font-size:8.5px;letter-spacing:-0.25px;color:#333">PBBim.Tool.ArchMaterial</div>
<div class="t" style="left:598px;top:198.0px;height:20px;line-height:20px;font-size:8px;color:#777;word-spacing:1.5px;font-family:&quot;Liberation Serif&quot;,serif">材料 设置</div>
<div style="left:315px;top:224.55833333333337px;width:497px;height:1px;background:#f6f6f6"></div>
<div class="t" style="left:316.5px;top:209.67222222222225px;height:20px;line-height:20px;font-size:8.5px;letter-spacing:-0.2px;color:#333">70</div>
<div class="t" style="left:342px;top:209.67222222222225px;height:20px;line-height:20px;font-size:8.5px;letter-spacing:-0.25px;color:#333">PBBim.Tool.ArchMaterialCombo</div>
<div class="t" style="left:598px;top:209.37222222222223px;height:20px;line-height:20px;font-size:8px;color:#777;word-spacing:1.5px;font-family:&quot;Liberation Serif&quot;,serif">复合材料 管理器</div>
<div style="left:315px;top:235.93055555555557px;width:497px;height:1px;background:#f6f6f6"></div>
<div class="t" style="left:316.5px;top:221.04444444444445px;height:20px;line-height:20px;font-size:8.5px;letter-spacing:-0.2px;color:#333">71</div>
<div class="t" style="left:342px;top:221.04444444444445px;height:20px;line-height:20px;font-size:8.5px;letter-spacing:-0.25px;color:#333">PBBim.Tool.ArchMirror</div>
<div class="t" style="left:598px;top:220.74444444444444px;height:20px;line-height:20px;font-size:8px;color:#777;word-spacing:1.5px;font-family:&quot;Liberation Serif&quot;,serif">镜像</div>
<div style="left:315px;top:247.3027777777778px;width:497px;height:1px;background:#f6f6f6"></div>
<div style="left:315px;top:235.5px;width:408px;height:11.5px;background:#c9c9c9;border-top:1px dotted #999"></div>
<div class="t" style="left:316.5px;top:232.41666666666669px;height:20px;line-height:20px;font-size:8.5px;letter-spacing:-0.2px;color:#333">72</div>
<div class="t" style="left:342px;top:232.41666666666669px;height:20px;line-height:20px;font-size:8.5px;letter-spacing:-0.25px;color:#333">PBBim.Tool.ArchMove</div>
<div class="t" style="left:598px;top:232.11666666666667px;height:20px;line-height:20px;font-size:8px;color:#777;word-spacing:1.5px;font-family:&quot;Liberation Serif&quot;,serif">移动</div>
<div style="left:315px;top:258.675px;width:497px;height:1px;background:#f6f6f6"></div>
<div class="t" style="left:316.5px;top:243.7888888888889px;height:20px;line-height:20px;font-size:8.5px;letter-spacing:-0.2px;color:#333">73</div>
<div class="t" style="left:342px;top:243.7888888888889px;height:20px;line-height:20px;font-size:8.5px;letter-spacing:-0.25px;color:#333">PBBim.Tool.ArchOffset</div>
<div class="t" style="left:598px;top:243.48888888888888px;height:20px;line-height:20px;font-size:8px;color:#777;word-spacing:1.5px;font-family:&quot;Liberation Serif&quot;,serif">偏移</div>
<div style="left:315px;top:270.04722222222216px;width:497px;height:1px;background:#f6f6f6"></div>
<div class="t" style="left:316.5px;top:255.1611111111111px;height:20px;line-height:20px;font-size:8.5px;letter-spacing:-0.2px;color:#333">74</div>
<div class="t" style="left:342px;top:255.1611111111111px;height:20px;line-height:20px;font-size:8.5px;letter-spacing:-0.25px;color:#333">PBBim.Tool.ArchRotate</div>
<div class="t" style="left:598px;top:254.8611111111111px;height:20px;line-height:20px;font-size:8px;color:#777;word-spacing:1.5px;font-family:&quot;Liberation Serif&quot;,serif">旋转</div>
<div style="left:315px;top:281.4194444444444px;width:497px;height:1px;background:#f6f6f6"></div>
<div class="t" style="left:316.5px;top:266.53333333333336px;height:20px;line-height:20px;font-size:8.5px;letter-spacing:-0.2px;color:#333">75</div>
<div class="t" style="left:342px;top:266.53333333333336px;height:20px;line-height:20px;font-size:8.5px;letter-spacing:-0.25px;color:#333">PBBim.Tool.ArchShader</div>
<div class="t" style="left:598px;top:266.23333333333335px;height:20px;line-height:20px;font-size:8px;color:#777;word-spacing:1.5px;font-family:&quot;Liberation Serif&quot;,serif">表面材质</div>
<div style="left:315px;top:292.79166666666663px;width:497px;height:1px;background:#f6f6f6"></div>
<div class="t" style="left:316.5px;top:277.90555555555557px;height:20px;line-height:20px;font-size:8.5px;letter-spacing:-0.2px;color:#333">76</div>
<div class="t" style="left:342px;top:277.90555555555557px;height:20px;line-height:20px;font-size:8.5px;letter-spacing:-0.25px;color:#333">PBBim.Tool.ArchTemplateExport</div>
<div class="t" style="left:598px;top:277.60555555555555px;height:20px;line-height:20px;font-size:8px;color:#777;word-spacing:1.5px;font-family:&quot;Liberation Serif&quot;,serif">导出</div>
<div style="left:315px;top:304.16388888888883px;width:497px;height:1px;background:#f6f6f6"></div>
<div class="t" style="left:316.5px;top:289.27777777777777px;height:20px;line-height:20px;font-size:8.5px;letter-spacing:-0.2px;color:#333">77</div>
<div class="t" style="left:342px;top:289.27777777777777px;height:20px;line-height:20px;font-size:8.5px;letter-spacing:-0.25px;color:#333">PBBim.Tool.ArchTemplateImport</div>
<div class="t" style="left:598px;top:288.97777777777776px;height:20px;line-height:20px;font-size:8px;color:#777;word-spacing:1.5px;font-family:&quot;Liberation Serif&quot;,serif">导入</div>
<div style="left:315px;top:315.5361111111111px;width:497px;height:1px;background:#f6f6f6"></div>
<div class="t" style="left:316.5px;top:300.65000000000003px;height:20px;line-height:20px;font-size:8.5px;letter-spacing:-0.2px;color:#333">78</div>
<div class="t" style="left:342px;top:300.65000000000003px;height:20px;line-height:20px;font-size:8.5px;letter-spacing:-0.25px;color:#333">PBBim.Tool.Archi.CommonCircle</div>
<div class="t" style="left:598px;top:300.35px;height:20px;line-height:20px;font-size:8px;color:#777;word-spacing:1.5px;font-family:&quot;Liberation Serif&quot;,serif">圆</div>
<div style="left:315px;top:326.9083333333333px;width:497px;height:1px;background:#f6f6f6"></div>
<div class="t" style="left:316.5px;top:312.02222222222224px;height:20px;line-height:20px;font-size:8.5px;letter-spacing:-0.2px;color:#333">79</div>
<div class="t" style="left:342px;top:312.02222222222224px;height:20px;line-height:20px;font-size:8.5px;letter-spacing:-0.25px;color:#333">PBBim.Tool.Archi.CommonLine</div>
<div class="t" style="left:598px;top:311.72222222222223px;height:20px;line-height:20px;font-size:8px;color:#777;word-spacing:1.5px;font-family:&quot;Liberation Serif&quot;,serif">线条</div>
<div style="left:315px;top:338.2805555555555px;width:497px;height:1px;background:#f6f6f6"></div>
<div class="t" style="left:316.5px;top:323.39444444444445px;height:20px;line-height:20px;font-size:8.5px;letter-spacing:-0.2px;color:#333">80</div>
<div class="t" style="left:342px;top:323.39444444444445px;height:20px;line-height:20px;font-size:8.5px;letter-spacing:-0.25px;color:#333">PBBim.Tool.Archi.ElemFind</div>
<div class="t" style="left:598px;top:323.09444444444443px;height:20px;line-height:20px;font-size:8px;color:#777;word-spacing:1.5px;font-family:&quot;Liberation Serif&quot;,serif">构件 查找</div>
<div style="left:315px;top:349.65277777777777px;width:497px;height:1px;background:#f6f6f6"></div>
<div class="t" style="left:316.5px;top:334.7666666666667px;height:20px;line-height:20px;font-size:8.5px;letter-spacing:-0.2px;color:#333">81</div>
<div class="t" style="left:342px;top:334.7666666666667px;height:20px;line-height:20px;font-size:8.5px;letter-spacing:-0.25px;color:#333">PBBim.Tool.Archi.Ellipse</div>
<div class="t" style="left:598px;top:334.4666666666667px;height:20px;line-height:20px;font-size:8px;color:#777;word-spacing:1.5px;font-family:&quot;Liberation Serif&quot;,serif">椭圆</div>
<div style="left:315px;top:361.0249999999999px;width:497px;height:1px;background:#f6f6f6"></div>
<div class="t" style="left:316.5px;top:346.13888888888886px;height:20px;line-height:20px;font-size:8.5px;letter-spacing:-0.2px;color:#333">82</div>
<div class="t" style="left:342px;top:346.13888888888886px;height:20px;line-height:20px;font-size:8.5px;letter-spacing:-0.25px;color:#333">PBBim.Tool.AxisTransformation</div>
<div class="t" style="left:598px;top:345.83888888888885px;height:20px;line-height:20px;font-size:8px;color:#777;word-spacing:1.5px;font-family:&quot;Liberation Serif&quot;,serif">识别</div>
<div style="left:315px;top:372.3972222222222px;width:497px;height:1px;background:#f6f6f6"></div>
<div class="t" style="left:316.5px;top:357.5111111111111px;height:20px;line-height:20px;font-size:8.5px;letter-spacing:-0.2px;color:#333">83</div>
<div class="t" style="left:342px;top:357.5111111111111px;height:20px;line-height:20px;font-size:8.5px;letter-spacing:-0.25px;color:#333">PBBim.Tool.CheckMissing</div>
<div class="t" style="left:598px;top:357.2111111111111px;height:20px;line-height:20px;font-size:8px;color:#777;word-spacing:1.5px;font-family:&quot;Liberation Serif&quot;,serif">模型 自检</div>
<div style="left:315px;top:383.7694444444444px;width:497px;height:1px;background:#f6f6f6"></div>
<div class="t" style="left:316.5px;top:368.8833333333333px;height:20px;line-height:20px;font-size:8.5px;letter-spacing:-0.2px;color:#333">84</div>
<div class="t" style="left:342px;top:368.8833333333333px;height:20px;line-height:20px;font-size:8.5px;letter-spacing:-0.25px;color:#333">PBBim.Tool.Common.DimStyle...</div>
<div class="t" style="left:598px;top:368.5833333333333px;height:20px;line-height:20px;font-size:8px;color:#777;word-spacing:1.5px;font-family:&quot;Liberation Serif&quot;,serif">尺寸 样式</div>
<div style="left:315px;top:395.1416666666666px;width:497px;height:1px;background:#f6f6f6"></div>
<div class="t" style="left:316.5px;top:380.25555555555553px;height:20px;line-height:20px;font-size:8.5px;letter-spacing:-0.2px;color:#333">85</div>
<div class="t" style="left:342px;top:380.25555555555553px;height:20px;line-height:20px;font-size:8.5px;letter-spacing:-0.25px;color:#333">PBBim.Tool.Common.TextStyle...</div>
<div class="t" style="left:598px;top:379.9555555555555px;height:20px;line-height:20px;font-size:8px;color:#777;word-spacing:1.5px;font-family:&quot;Liberation Serif&quot;,serif">文字 样式</div>
<div style="left:315px;top:406.51388888888886px;width:497px;height:1px;background:#f6f6f6"></div>
<div class="t" style="left:316.5px;top:391.6277777777778px;height:20px;line-height:20px;font-size:8.5px;letter-spacing:-0.2px;color:#333">86</div>
<div class="t" style="left:342px;top:391.6277777777778px;height:20px;line-height:20px;font-size:8.5px;letter-spacing:-0.25px;color:#333">PBBim.Tool.CopyElem</div>
<div class="t" style="left:598px;top:391.3277777777778px;height:20px;line-height:20px;font-size:8px;color:#777;word-spacing:1.5px;font-family:&quot;Liberation Serif&quot;,serif"></div>
<div style="left:315px;top:417.88611111111106px;width:497px;height:1px;background:#f6f6f6"></div>
<div class="t" style="left:316.5px;top:403.0px;height:20px;line-height:20px;font-size:8.5px;letter-spacing:-0.2px;color:#333">87</div>
<div class="t" style="left:342px;top:403.0px;height:20px;line-height:20px;font-size:8.5px;letter-spacing:-0.25px;color:#333">PBBim.Tool.CreateArchOpening...</div>
<div class="t" style="left:598px;top:402.7px;height:20px;line-height:20px;font-size:8px;color:#777;word-spacing:1.5px;font-family:&quot;Liberation Serif&quot;,serif">建筑构件 开洞</div>
<div style="left:466px;top:235px;width:129.5px;height:12.5px;border:2px solid #f3954f"></div>
<div class="t" style="left:469px;top:232px;height:20px;line-height:20px;font-size:8.5px;letter-spacing:-0.25px;color:#333">AMO</div>
<div style="left:812px;top:189px;width:13.5px;height:230.5px;background:#e6e6e6"></div>
<div style="left:812px;top:189px;width:13.5px;height:12.5px;background:#fff;border:1px solid #e6e6e6"></div>
<svg style="position:absolute;left:815px;top:193.5px" width="8" height="4" viewBox="0 0 8 4"><path d="M0 4h8L4 0z" fill="#666"/></svg>
<div style="left:812px;top:285px;width:13.5px;height:24px;background:#fff;border:1px solid #e0e0e0"></div>
<div style="left:812px;top:406.5px;width:13.5px;height:12.5px;background:#fff;border:1px solid #e6e6e6"></div>
<svg style="position:absolute;left:815px;top:411px" width="8" height="4" viewBox="0 0 8 4"><path d="M0 0h8L4 4z" fill="#555"/></svg>
<div style="left:327.5px;top:424px;width:111px;height:16px;background:#fff;border:1px solid #e2e2e2"></div>
<div class="t" style="left:331px;top:423px;height:20px;line-height:20px;font-size:8px;color:#999;font-family:&quot;Liberation Serif&quot;,serif">搜索</div>
<svg style="position:absolute;left:423px;top:425px" width="14" height="14" viewBox="0 0 14 14"><circle cx="8.5" cy="5.5" r="4" fill="none" stroke="#2c4f85" stroke-width="1.3"/><path d="M5.5 8.5L1.5 12.5" stroke="#2c4f85" stroke-width="1.8"/></svg>
<div style="left:448px;top:430px;width:9.5px;height:9.5px;background:#fff;border:1px solid #c4c4c4"></div>
<svg style="position:absolute;left:449.2px;top:431.3px" width="7" height="7" viewBox="0 0 7 7"><path d="M0.8 3.5l2 2.2L6.3 1" fill="none" stroke="#333" stroke-width="1.1"/></svg>
<div class="t" style="left:460px;top:424.5px;height:20px;line-height:20px;font-size:9px;letter-spacing:0.27px;color:#666;font-family:&quot;Liberation Serif&quot;,serif">仅显示当前专业命令</div>
<div style="left:551px;top:423.5px;width:21.5px;height:17px;background:#fff;border:1px solid #dcdcdc"></div>
<div style="left:586.5px;top:423.5px;width:21.5px;height:17px;background:#fff;border:1px solid #dcdcdc"></div>
<div style="left:622.5px;top:423.5px;width:21.5px;height:17px;background:#fff;border:1px solid #dcdcdc"></div>
<svg style="position:absolute;left:556px;top:427px" width="14" height="11" viewBox="0 0 14 11"><path d="M1 1h5l3 3v2M1 1v9h6" fill="none" stroke="#999" stroke-width="1.2"/><path d="M7 6.5h3M8.5 5v3" stroke="#999" stroke-width="1"/><circle cx="12" cy="9" r="0.7" fill="#555"/></svg>
<svg style="position:absolute;left:591px;top:427px" width="14" height="11" viewBox="0 0 14 11"><path d="M1 1h5l3 3v2M1 1v9h6" fill="none" stroke="#999" stroke-width="1.2"/><path d="M6.5 7h3" stroke="#999" stroke-width="1"/><circle cx="12" cy="9" r="0.7" fill="#555"/></svg>
<svg style="position:absolute;left:627px;top:426px" width="14" height="12" viewBox="0 0 14 12"><path d="M3 2.5a4.3 4.3 0 1 0 3-1" fill="none" stroke="#999" stroke-width="1.2"/><path d="M5 0l2 1.5L5 3z" fill="#999"/><circle cx="12" cy="10" r="0.7" fill="#555"/></svg>
<div style="left:704px;top:423px;width:60px;height:17.5px;background:#fff;border:1px solid #8c8c8c"></div>
<div class="t" style="left:634px;top:422px;width:200px;height:20px;line-height:20px;text-align:center;font-size:10px;color:#555;font-family:&quot;Liberation Serif&quot;,serif">确定</div>
<div style="left:767px;top:423px;width:59px;height:17.5px;background:#fff;border:1px solid #cfcfcf"></div>
<div class="t" style="left:696.5px;top:422px;width:200px;height:20px;line-height:20px;text-align:center;font-size:10px;color:#555;font-family:&quot;Liberation Serif&quot;,serif">取消</div>
<div style="left:544px;top:501px;width:329px;height:111px;background:#fff;border:1px solid #e4e4e4"></div>
<div class="t" style="left:548px;top:500px;height:20px;line-height:20px;font-size:11.2px;color:#333">PlaceFrame</div>
<div class="t" style="left:548px;top:516px;height:20px;line-height:20px;font-size:11.2px;color:#333">meppyramid</div>
<div class="t" style="left:548px;top:532px;height:20px;line-height:20px;font-size:11.2px;color:#333">PlaceLamp</div>
<div class="t" style="left:548px;top:548px;height:20px;line-height:20px;font-size:11.2px;color:#333">LKChamber</div>
<div class="t" style="left:548px;top:564px;height:20px;line-height:20px;font-size:11.2px;color:#333">Chamber</div>
<div style="left:546px;top:584px;width:311px;height:13.5px;background:#f0f0f0"></div>
<div class="t" style="left:548px;top:580.5px;height:20px;line-height:20px;font-size:11.2px;color:#333">AMO</div>
<div style="left:857.5px;top:501.5px;width:15px;height:111px;background:#e6e6e6"></div>
<div style="left:857.5px;top:501.5px;width:15px;height:15px;background:#fff;border:1px solid #e4e4e4"></div>
<svg style="position:absolute;left:861px;top:506.5px" width="8" height="5" viewBox="0 0 8 5"><path d="M0 5h8L4 0z" fill="#666"/></svg>
<div style="left:857.5px;top:572.5px;width:15px;height:25px;background:#fff;border:1px solid #e4e4e4"></div>
<div style="left:857.5px;top:597px;width:15px;height:14px;background:#fff;border:1px solid #e4e4e4"></div>
<svg style="position:absolute;left:861px;top:602px" width="8" height="5" viewBox="0 0 8 5"><path d="M0 0h8L4 5z" fill="#666"/></svg>
<div style="left:544px;top:611.5px;width:329px;height:1.3px;background:#7a7a7a"></div>
<div style="left:544px;top:612.5px;width:329px;height:21px;background:#fff"></div>
<div class="t" style="left:546px;top:611.5px;height:20px;line-height:20px;font-size:12px;color:#888">AMO</div>
<div style="left:835px;top:613px;width:17px;height:19px;background:#eef1f4"></div>
<svg style="position:absolute;left:838.5px;top:616px" width="11" height="11" viewBox="0 0 11 11"><path d="M0.7 0.7l9.6 9.6M10.3 0.7l-9.6 9.6" stroke="#9ab0c4" stroke-width="1.1"/></svg>
<div style="left:852px;top:613px;width:1px;height:19px;background:#ccc"></div>
<svg style="position:absolute;left:857px;top:617px" width="11" height="9" viewBox="0 0 11 9"><path d="M0 9h11L5.5 0z" fill="#666"/></svg>
<div style="left:543.5px;top:581.5px;width:330px;height:52px;border:2px solid #f3954f"></div>
<div style="left:544px;top:633.5px;width:330px;height:2px;background:rgba(0,0,0,0.12)"></div>
<div style="left:491px;top:85.3px;width:205.7px;height:26.5px;background:#736e6d"></div>
<div class="t" style="left:500.5px;top:90px;height:20px;line-height:20px;font-size:18px;color:#fff;letter-spacing:0.3px;-webkit-text-stroke:0.3px #fff">启动快捷命令管理窗口</div>
<div style="left:472.9px;top:92.10000000000001px;width:12.6px;height:12.6px;border-radius:50%;background:#f5832e;color:#fff;font-size:9.5px;line-height:12.6px;text-align:center;font-family:'Liberation Sans',sans-serif">1</div>
<div style="left:491px;top:256px;width:134px;height:27px;background:#736e6d"></div>
<div class="t" style="left:500.5px;top:260.7px;height:20px;line-height:20px;font-size:18px;color:#fff;letter-spacing:0.3px;-webkit-text-stroke:0.3px #fff">设置快捷命令</div>
<div style="left:472.8px;top:262.7px;width:12.6px;height:12.6px;border-radius:50%;background:#f5832e;color:#fff;font-size:9.5px;line-height:12.6px;text-align:center;font-family:'Liberation Sans',sans-serif">2</div>
<div style="left:897px;top:512px;width:207px;height:50px;background:#736e6d"></div>
<div class="t" style="left:907.5px;top:517.5px;line-height:21.3px;font-size:18px;color:#fff;letter-spacing:0.3px;-webkit-text-stroke:0.3px #fff">按回车键或光标点击即<br>可激活命令</div>
<div style="left:878.7px;top:530.7px;width:12.6px;height:12.6px;border-radius:50%;background:#f5832e;color:#fff;font-size:9.5px;line-height:12.6px;text-align:center;font-family:'Liberation Sans',sans-serif">4</div>
<div style="left:897px;top:587px;width:207px;height:34px;background:#736e6d"></div>
<div class="t" style="left:907.5px;top:595px;height:20px;line-height:20px;font-size:18px;color:#fff;letter-spacing:0.3px;-webkit-text-stroke:0.3px #fff">提示行中输入快捷命令</div>
<div style="left:878.7px;top:597.7px;width:12.6px;height:12.6px;border-radius:50%;background:#f5832e;color:#fff;font-size:9.5px;line-height:12.6px;text-align:center;font-family:'Liberation Sans',sans-serif">3</div>
</body></html>
